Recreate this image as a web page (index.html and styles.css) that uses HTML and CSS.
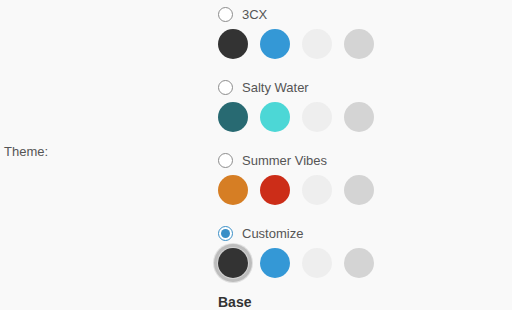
FILE: index.html
```html
<!DOCTYPE html>
<html lang="en">
<head>
    <meta charset="UTF-8">
    <title>Theme</title>
    <link rel="stylesheet" href="styles.css">
</head>
<body>
    <div class="setting-row">
        <div class="setting-label">Theme:</div>
        <div class="setting-value">
            <div class="theme-option">
                <label class="theme-name"><input type="radio" name="theme"> 3CX</label>
                <div class="swatches">
                    <span class="swatch" style="background:#333333"></span>
                    <span class="swatch" style="background:#3498d6"></span>
                    <span class="swatch" style="background:#eeeeee"></span>
                    <span class="swatch" style="background:#d4d4d4"></span>
                </div>
            </div>
            <div class="theme-option">
                <label class="theme-name"><input type="radio" name="theme"> Salty Water</label>
                <div class="swatches">
                    <span class="swatch" style="background:#286a72"></span>
                    <span class="swatch" style="background:#4cd7d6"></span>
                    <span class="swatch" style="background:#eeeeee"></span>
                    <span class="swatch" style="background:#d4d4d4"></span>
                </div>
            </div>
            <div class="theme-option">
                <label class="theme-name"><input type="radio" name="theme"> Summer Vibes</label>
                <div class="swatches">
                    <span class="swatch" style="background:#d67e24"></span>
                    <span class="swatch" style="background:#cc2d18"></span>
                    <span class="swatch" style="background:#eeeeee"></span>
                    <span class="swatch" style="background:#d4d4d4"></span>
                </div>
            </div>
            <div class="theme-option">
                <label class="theme-name"><input type="radio" name="theme" checked> Customize</label>
                <div class="swatches">
                    <span class="swatch active" style="background:#333333"></span>
                    <span class="swatch" style="background:#3498d6"></span>
                    <span class="swatch" style="background:#eeeeee"></span>
                    <span class="swatch" style="background:#d4d4d4"></span>
                </div>
            </div>
            <h4 class="section-title">Base</h4>
        </div>
    </div>
</body>
</html>
```

FILE: styles.css
```css
* {
    margin: 0;
    padding: 0;
    box-sizing: border-box;
}

body {
    font-family: 'Liberation Sans', Arial, sans-serif;
    font-size: 13px;
    color: #555;
    background: #f9f9f9;
    padding: 7px 4px 0;
}

.setting-row {
    display: flex;
    align-items: center;
}

.setting-label {
    width: 214px;
    flex-shrink: 0;
    padding-bottom: 20px;
}

.theme-option {
    margin-bottom: 21px;
}

.theme-name {
    display: flex;
    align-items: center;
    gap: 9px;
    height: 15px;
    margin-bottom: 7px;
    cursor: pointer;
}

.theme-name input {
    appearance: none;
    width: 15px;
    height: 15px;
    border: 1px solid #8c8c8c;
    border-radius: 50%;
    background: #fff;
    position: relative;
    margin: 0;
}

.theme-name input:checked {
    border-color: #3a8fc7;
}

.theme-name input:checked::after {
    content: "";
    position: absolute;
    left: 2px;
    top: 2px;
    width: 9px;
    height: 9px;
    border-radius: 50%;
    background: #3a8fc7;
}

.swatches {
    display: flex;
    gap: 12px;
}

.swatch {
    width: 30px;
    height: 30px;
    border-radius: 50%;
    display: inline-block;
}

.swatch.active {
    box-shadow: 0 0 0 1px #d4d4d4, 0 0 0 4px #bdbdbd, 0 0 0 5px #e0e0e0;
}

.section-title {
    font-size: 14px;
    font-weight: bold;
    color: #333;
    margin-top: -5px;
    margin-bottom: 6px;
}
```
